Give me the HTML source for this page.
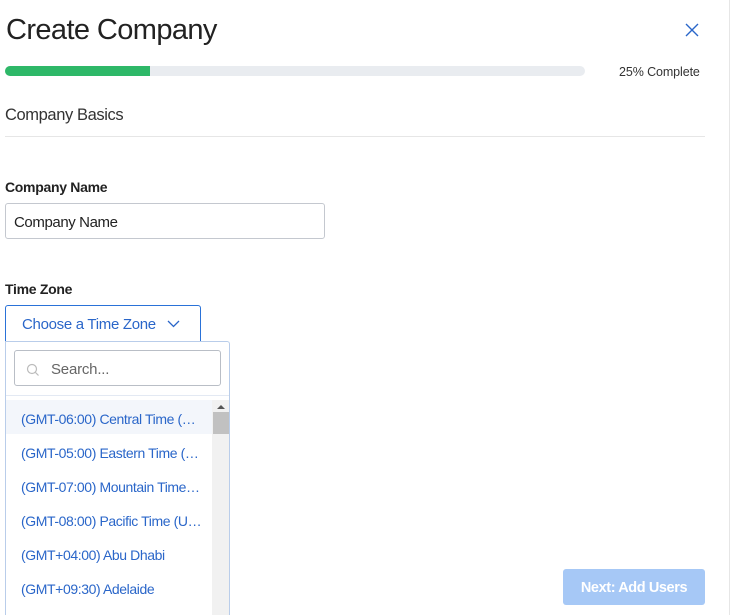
<!DOCTYPE html>
<html><head><meta charset="utf-8"><style>
*{box-sizing:border-box;margin:0;padding:0}
html,body{width:730px;height:615px;overflow:hidden}
body{background:#fff;font-family:"Liberation Sans",sans-serif;color:#222;position:relative}
.a{position:absolute;white-space:nowrap}
</style></head><body>
<div class="a" style="left:729px;top:0;width:1px;height:615px;background:#e6e6e6"></div>
<div class="a" style="left:6px;top:14px;font-size:29px;letter-spacing:-0.6px;color:#222">Create Company</div>
<svg class="a" style="left:685px;top:23px" width="14" height="14" viewBox="0 0 14 14"><path d="M1 1L13 13M13 1L1 13" stroke="#2a66c9" stroke-width="1.4" fill="none"/></svg>
<div class="a" style="left:5px;top:66px;width:580px;height:10px;border-radius:5px;background:#e9ecf0"></div>
<div class="a" style="left:5px;top:66px;width:145px;height:10px;border-radius:5px 0 0 5px;background:#2eb868"></div>
<div class="a" style="left:619px;top:65px;font-size:12.5px;letter-spacing:-0.1px;color:#333">25% Complete</div>
<div class="a" style="left:5px;top:106px;font-size:16.5px;letter-spacing:-0.4px;color:#333">Company Basics</div>
<div class="a" style="left:5px;top:136px;width:700px;height:1px;background:#e6e6e6"></div>
<div class="a" style="left:5px;top:179px;font-size:14px;font-weight:bold;letter-spacing:-0.3px;color:#222">Company Name</div>
<div class="a" style="left:5px;top:203px;width:320px;height:36px;border:1px solid #c4c8cf;border-radius:3px;font-size:15px;letter-spacing:-0.4px;padding:10px 0 0 8px;color:#222">Company Name</div>
<div class="a" style="left:5px;top:281px;font-size:14px;font-weight:bold;letter-spacing:-0.3px;color:#222">Time Zone</div>
<div class="a" style="left:5px;top:305px;width:196px;height:37px;border:1px solid #2a72d8;border-radius:3px 3px 0 0;font-size:15px;letter-spacing:-0.3px;padding:10px 0 0 16px;color:#2a66c9">Choose a Time Zone</div>
<svg class="a" style="left:167px;top:320px" width="13" height="8" viewBox="0 0 13 8"><path d="M1 1L6.5 6.5L12 1" stroke="#2a66c9" stroke-width="1.3" fill="none"/></svg>
<div class="a" style="left:5px;top:341px;width:225px;height:274px;border:1px solid #b9cdea;border-bottom:none;border-radius:0 3px 0 0;background:#fff;overflow:hidden">
 <div class="a" style="left:8px;top:8px;width:207px;height:36px;border:1px solid #b9bec6;border-radius:3px;font-size:15px;letter-spacing:-0.2px;color:#666;padding:10px 0 0 36px">Search...</div>
 <svg class="a" style="left:20px;top:21px" width="14" height="14" viewBox="0 0 14 14"><circle cx="6" cy="6" r="4.5" stroke="#bbb" stroke-width="1.2" fill="none"/><path d="M9.5 9.5L12.5 12.5" stroke="#bbb" stroke-width="1.2"/></svg>
 <div class="a" style="left:0;top:53px;width:225px;height:1px;background:#e3e9f3"></div>
 <div class="a" style="left:0;top:58px;width:206px;height:34px;background:#f3f6fb"></div>
 <div class="a" style="left:206px;top:58px;width:18px;height:230px;background:#f1f1f1"></div>
 <div class="a" style="left:207px;top:70px;width:16px;height:22px;background:#c1c1c1"></div>
 <svg class="a" style="left:211px;top:62px" width="8" height="5" viewBox="0 0 8 5"><path d="M0 5L4 1L8 5" fill="#555"/></svg>
 <div style="position:absolute;left:15px;top:60px;font-size:14px;letter-spacing:-0.4px;color:#2a66c9;line-height:34px;white-space:nowrap">
  <div>(GMT-06:00) Central Time (…</div>
  <div>(GMT-05:00) Eastern Time (…</div>
  <div>(GMT-07:00) Mountain Time…</div>
  <div>(GMT-08:00) Pacific Time (U…</div>
  <div>(GMT+04:00) Abu Dhabi</div>
  <div>(GMT+09:30) Adelaide</div>
 </div>
</div>
<div class="a" style="left:563px;top:569px;width:142px;height:36px;background:#a6c8f6;border-radius:3px;color:#fff;font-size:14.5px;font-weight:bold;letter-spacing:-0.4px;text-align:center;line-height:38px">Next: Add Users</div>
</body></html>
